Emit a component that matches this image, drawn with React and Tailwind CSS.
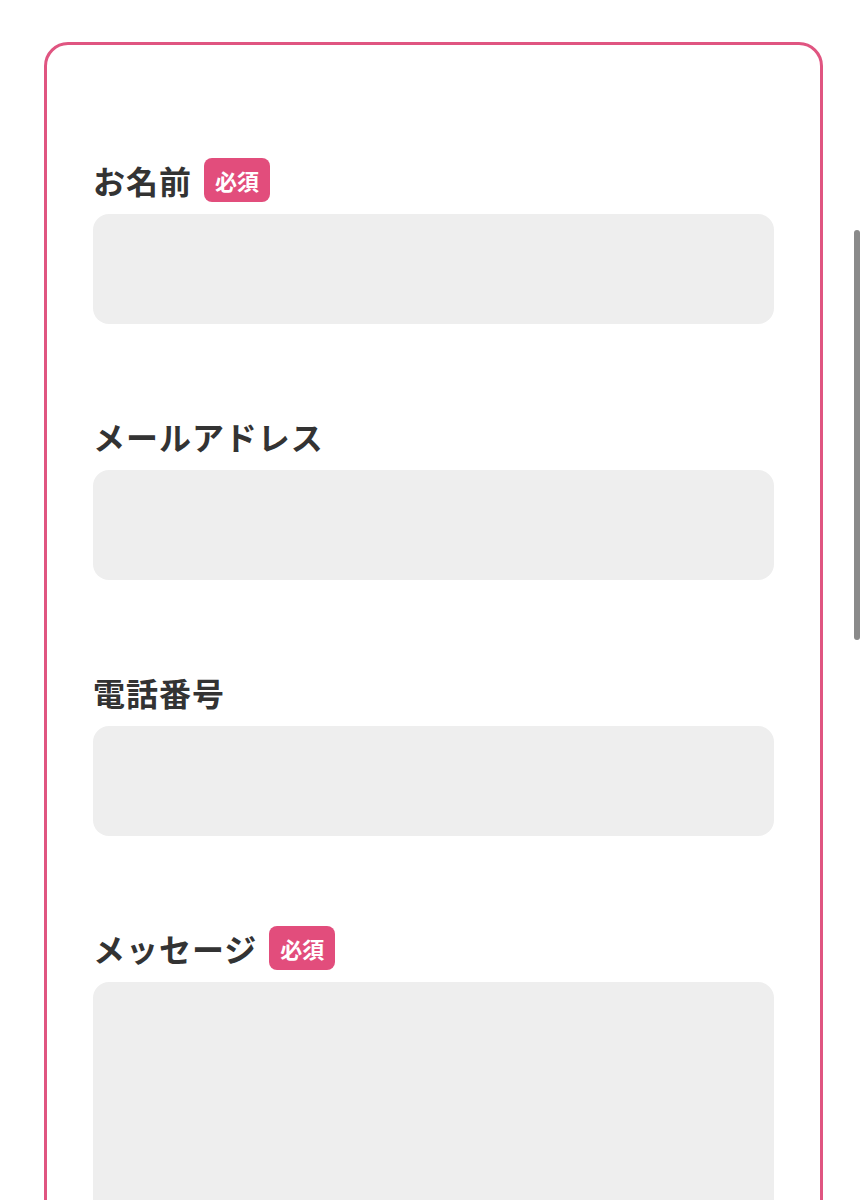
const fields = [
  { label: "お名前", required: true, tall: false },
  { label: "メールアドレス", required: false, tall: false },
  { label: "電話番号", required: false, tall: false },
  { label: "メッセージ", required: true, tall: true },
];

function Badge() {
  return (
    <span className="inline-flex h-11 w-[66px] items-center justify-center rounded-lg bg-[#e24d7c] text-[22px] font-bold text-white">
      必須
    </span>
  );
}

export default function App() {
  return (
    <div
      className="relative min-h-[1200px] bg-white px-[44px] pt-[42px]"
      style={{ fontFamily: '"Noto Sans CJK JP", "Noto Sans", sans-serif' }}
    >
      <div className="rounded-[24px] border-[3px] border-[#e05581] px-[46px] pt-[113px] pb-10">
        <div className="flex flex-col gap-[90px]">
          {fields.map((f) => (
            <div key={f.label} className="flex flex-col gap-3">
              <div className="flex h-11 items-center gap-3">
                <span className="text-[32px] font-bold leading-none tracking-[0.03em] text-[#333333]">
                  {f.label}
                </span>
                {f.required && <Badge />}
              </div>
              <div
                className={
                  f.tall
                    ? "h-[300px] rounded-2xl bg-[#eeeeee]"
                    : "h-[110px] rounded-2xl bg-[#eeeeee]"
                }
              />
            </div>
          ))}
        </div>
      </div>
      <div className="fixed right-[7px] top-[230px] h-[410px] w-[6px] rounded-full bg-[#8a8a8a]" />
    </div>
  );
}
